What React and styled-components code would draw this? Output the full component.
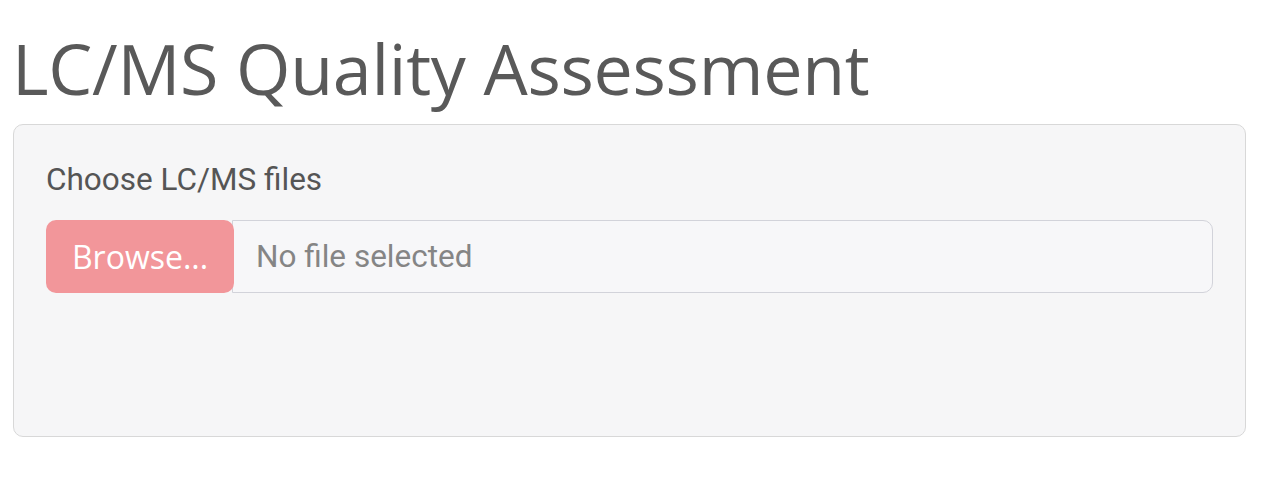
import React from "react";
import styled, { createGlobalStyle } from "styled-components";

const Global = createGlobalStyle`
  html, body { margin: 0; padding: 0; background: #ffffff; }
  body { font-family: Roboto, "Liberation Sans", sans-serif; }
`;

const Page = styled.div`
  padding: 0 40px 0 13px;
  display: flex;
  flex-direction: column;
`;

const Title = styled.h1`
  margin: 26px 0 14px -1px;
  font-family: "Open Sans", "Liberation Sans", sans-serif;
  font-weight: 400;
  font-size: 70px;
  line-height: 84px;
  color: #595959;
  letter-spacing: -0.3px;
`;

const Card = styled.section`
  box-sizing: border-box;
  height: 313px;
  background: #f6f6f7;
  border: 1px solid #d8d8d8;
  border-radius: 10px;
  padding: 31px 32px 0 32px;
  display: flex;
  flex-direction: column;
  gap: 16px;
`;

const Label = styled.label`
  font-family: Roboto, "Liberation Sans", sans-serif;
  font-size: 31.5px;
  line-height: 48px;
  color: #555555;
`;

const InputGroup = styled.div`
  display: flex;
  height: 73px;
`;

const BrowseButton = styled.button`
  flex: 0 0 188px;
  border: none;
  border-radius: 10px;
  background: #f2969a;
  color: #ffffff;
  font-family: "Open Sans", "Liberation Sans", sans-serif;
  font-size: 32px;
  padding: 0;
  position: relative;
  z-index: 1;
  margin-right: -2px;
`;

const FileField = styled.div`
  flex: 1;
  box-sizing: border-box;
  display: flex;
  align-items: center;
  padding-left: 23px;
  background: #f7f7f9;
  border: 1px solid #d2d3da;
  border-radius: 0 10px 10px 0;
  font-family: Roboto, "Liberation Sans", sans-serif;
  font-size: 31.5px;
  color: #858585;
`;

export default function App() {
  return (
    <>
      <Global />
      <Page>
        <Title>LC/MS Quality Assessment</Title>
        <Card>
          <Label>Choose LC/MS files</Label>
          <InputGroup>
            <BrowseButton>Browse...</BrowseButton>
            <FileField>No file selected</FileField>
          </InputGroup>
        </Card>
      </Page>
    </>
  );
}
